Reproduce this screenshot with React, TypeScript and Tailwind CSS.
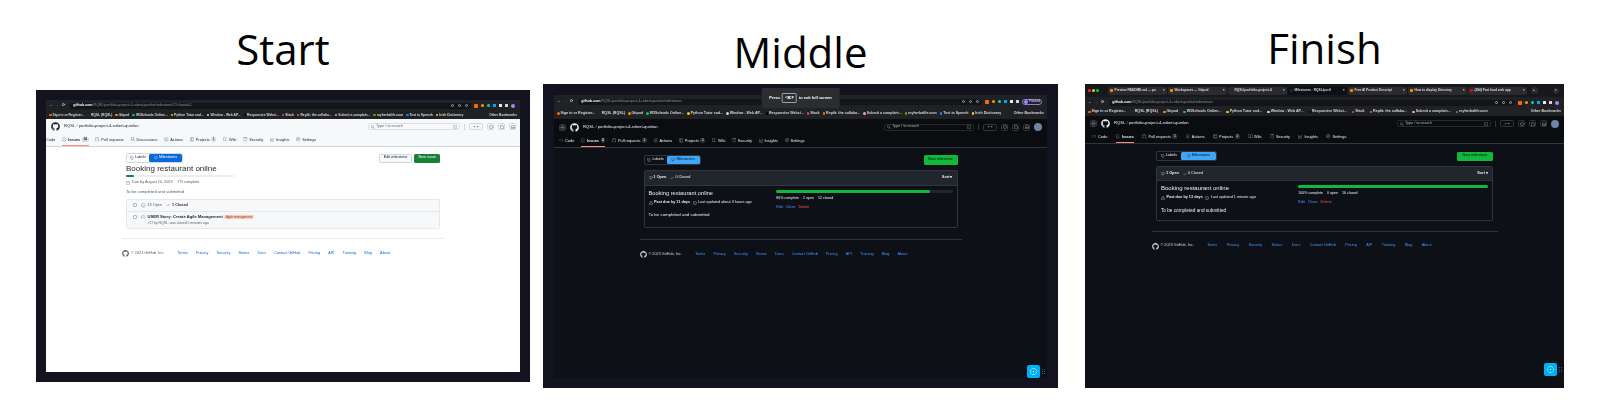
import { ReactNode } from "react";
import { FaGithub } from "react-icons/fa";
import { Menu } from "lucide-react";
import {
  GoAlert,
  GoBook,
  GoCalendar,
  GoCheck,
  GoClock,
  GoCode,
  GoCommentDiscussion,
  GoGear,
  GoGitPullRequest,
  GoGraph,
  GoInbox,
  GoIssueClosed,
  GoIssueOpened,
  GoMilestone,
  GoPlay,
  GoPlus,
  GoSearch,
  GoShield,
  GoTable,
  GoTag,
  GoTerminal,
  GoTriangleDown,
} from "react-icons/go";

const footerLinks = ["Terms", "Privacy", "Security", "Status", "Docs", "Contact GitHub", "Pricing", "API", "Training", "Blog", "About"];

const bookmarks = [
  { label: "Sign in or Register...", dot: "bg-orange-500" },
  { label: "RQSL (RQSL)", dot: "bg-gray-800" },
  { label: "Gitpod", dot: "bg-orange-400" },
  { label: "W3Schools Online...", dot: "bg-green-500" },
  { label: "Python Tutor cod...", dot: "bg-yellow-400" },
  { label: "Window - Web AP...", dot: "bg-gray-300" },
  { label: "Responsive Websi...", dot: "bg-black" },
  { label: "Slack", dot: "bg-pink-500" },
  { label: "Replit: the collabo...", dot: "bg-orange-500" },
  { label: "Submit a complain...", dot: "bg-rose-300" },
  { label: "myherbalife.com", dot: "bg-lime-600" },
];

const extraBookmarks = [
  { label: "Text to Speech", dot: "bg-blue-500" },
  { label: "Irish Dictionary", dot: "bg-amber-300" },
];

const browserTabs = ["Preview README.md — po", "Workspaces — Gitpod", "RQSL/portfolio-project-4", "Milestones · RQSL/portf", "Free AI Product Descript", "How to display Directory", "(284) Fast food web app"];

type TabDef = { label: string; icon: ReactNode; count?: string; active?: boolean };

function makeTabs(issues: string, pulls: string, discussions: boolean): TabDef[] {
  const tabs: TabDef[] = [
    { label: "Code", icon: <GoCode /> },
    { label: "Issues", icon: <GoIssueOpened />, count: issues, active: true },
    { label: "Pull requests", icon: <GoGitPullRequest />, count: pulls },
  ];
  if (discussions) tabs.push({ label: "Discussions", icon: <GoCommentDiscussion /> });
  return tabs.concat([
    { label: "Actions", icon: <GoPlay /> },
    { label: "Projects", icon: <GoTable />, count: "1" },
    { label: "Wiki", icon: <GoBook /> },
    { label: "Security", icon: <GoShield /> },
    { label: "Insights", icon: <GoGraph /> },
    { label: "Settings", icon: <GoGear /> },
  ]);
}

type BrowserProps = {
  url: string;
  addressRow: string;
  bookmarkRow: string;
  extras?: boolean;
  showNotice?: boolean;
  tabs?: boolean;
  paused?: boolean;
};

function Browser({ url, addressRow, bookmarkRow, extras, showNotice, tabs, paused }: BrowserProps) {
  const marks = extras ? bookmarks.concat(extraBookmarks) : bookmarks;
  return (
    <div className="relative bg-[#202124] text-[3.6px] font-bold text-[#d5d7da]">
      {tabs && (
        <div className="flex h-[13px] items-center bg-[#17181b] px-[3px] text-[3.2px]">
          <div className="mr-[9px] flex gap-[1.5px]">
            <span className="size-[2.5px] rounded-full bg-red-500" />
            <span className="size-[2.5px] rounded-full bg-yellow-400" />
            <span className="size-[2.5px] rounded-full bg-green-500" />
          </div>
          {browserTabs.map((t, i) => (
            <div key={t} className={`mr-[1px] flex h-[8px] w-[59px] items-center gap-[2px] rounded-[2px] px-[2px] whitespace-nowrap ${i === 3 ? "bg-[#0d1117]" : "bg-[#2a2b2f]"}`}>
              <span className={`size-[3px] shrink-0 rounded-[1px] ${i === 6 ? "bg-red-600" : i === 2 || i === 3 ? "bg-gray-800" : "bg-orange-400"}`} />
              <span className="flex-1">{t}</span>
              <span>×</span>
            </div>
          ))}
          <span className="ml-[3px] flex size-[7px] items-center justify-center rounded-full bg-[#2a2b2f]">+</span>
          <span className="mr-[2px] ml-auto flex size-[6px] items-center justify-center rounded-full bg-[#2a2b2f] text-[3px]">▾</span>
        </div>
      )}
      <div className={`flex items-center gap-[3px] px-[3px] ${addressRow}`}>
        <span>←</span>
        <span className="text-gray-500">→</span>
        <span>⟳</span>
        <div className="ml-[2px] flex h-[6px] flex-1 items-center rounded-full bg-[#131417] px-[3px] font-normal">
          <span className="font-bold text-white">github.com</span>
          <span className="text-[#8d9096]">{url}</span>
          <span className="ml-auto flex gap-[4px]">
            <span className="size-[3px] rounded-full border-[0.5px] border-gray-400" />
            <span className="size-[3px] rounded-full border-[0.5px] border-gray-400" />
            <span className="size-[3px] rounded-full border-[0.5px] border-gray-400" />
          </span>
        </div>
        <div className="flex items-center gap-[3px] pr-[2px]">
          <span className="size-[4px] rounded-[1px] bg-orange-500" />
          <span className="size-[3px] rounded-full bg-amber-500" />
          <span className="size-[3px] rounded-full bg-teal-400" />
          <span className="size-[3px] bg-sky-500" />
          <span className="size-[3px] bg-gray-200" />
          <span className="size-[3px] bg-gray-300" />
          {paused ? (
            <span className="flex h-[6px] items-center gap-[1px] rounded-full border-[0.5px] border-[#8f7bd8] px-[1px] text-[3px] text-[#c9c2ee]">
              <span className="size-[4px] rounded-full bg-violet-400" />
              Paused
            </span>
          ) : (
            <span className="size-[4px] rounded-full bg-violet-400" />
          )}
        </div>
      </div>
      <div className={`flex items-center overflow-hidden px-[3px] whitespace-nowrap ${bookmarkRow}`}>
        {marks.map((b) => (
          <span key={b.label} className="flex items-center gap-[1px]">
            <span className={`size-[2.5px] rounded-full ${b.dot}`} />
            {b.label}
          </span>
        ))}
        <span className="ml-auto pl-[4px]">Other Bookmarks</span>
      </div>
      {showNotice && (
        <div className="absolute top-[-7px] left-1/2 flex h-[20px] -translate-x-1/2 items-center gap-[2px] rounded-b-[3px] bg-[#2c2d31] px-[8px] text-[4px] text-white">
          Press <span className="rounded-[1px] border border-gray-400 px-[2px] py-[1px]">^⌘F</span> to exit full screen
        </div>
      )}
    </div>
  );
}

type HeaderProps = {
  dark: boolean;
  tabs: TabDef[];
  tabRow: string;
  hamburger: boolean;
  repoRow: string;
  searchWidth: string;
};

function RepoHeader({ dark, tabs, tabRow, hamburger, repoRow, searchWidth }: HeaderProps) {
  const border = dark ? "border-[#30363d]" : "border-[#d0d7de]";
  const text = dark ? "text-[#e6edf3]" : "text-[#1f2328]";
  return (
    <div className={`border-b ${border} ${text} ${dark ? "bg-[#0a0c10]" : "bg-[#f6f8fa]"}`}>
      <div className={`flex items-center gap-[4px] text-[4.2px] ${repoRow}`}>
        {hamburger && (
          <span className={`flex size-[7px] items-center justify-center rounded-[1.5px] border ${border}`}>
            <Menu size={5} />
          </span>
        )}
        <FaGithub className="text-[9px]" />
        <span className="font-medium">
          RQSL <span className="opacity-60">/</span> portfolio-project-4-robert-quinlan
        </span>
        <div className={`ml-auto flex h-[7px] items-center gap-[1px] rounded-[1.5px] border px-[2px] text-[3.8px] opacity-70 ${border} ${searchWidth}`}>
          <GoSearch className="text-[4px]" />
          Type / to search
          <GoTerminal className="ml-auto text-[4px]" />
        </div>
        <span className={`h-[6px] w-px ${dark ? "bg-[#30363d]" : "bg-[#d0d7de]"}`} />
        <span className={`flex h-[7px] w-[14px] shrink-0 items-center justify-center rounded-[1.5px] border text-[3.5px] ${border}`}>
          <GoPlus />
          <GoTriangleDown />
        </span>
        {[<GoIssueOpened key="a" />, <GoGitPullRequest key="b" />, <GoInbox key="c" />].map((icon, i) => (
          <span key={i} className={`flex size-[7px] shrink-0 items-center justify-center rounded-[1.5px] border text-[4px] ${border}`}>
            {icon}
          </span>
        ))}
        <span className="size-[8px] shrink-0 rounded-full bg-[#6d84a5]" />
      </div>
      <div className={`flex h-[12px] items-stretch text-[3.9px] ${tabRow}`}>
        {tabs.map((t) => (
          <span key={t.label} className={`flex items-center gap-[1.5px] border-b whitespace-nowrap ${t.active ? "border-[#fd8c73] font-semibold" : "border-transparent"}`}>
            <span className="text-[4.5px] opacity-70">{t.icon}</span>
            {t.label}
            {t.count && <span className="rounded-full bg-[#8b949e]/30 px-[1.5px] text-[3.4px]">{t.count}</span>}
          </span>
        ))}
      </div>
    </div>
  );
}

function Toggle({ dark, width }: { dark: boolean; width: string }) {
  return (
    <div className={`flex h-[10px] rounded-[1.5px] border text-[3.8px] font-medium ${width} ${dark ? "border-[#30363d] text-[#e6edf3]" : "border-[#d0d7de] text-[#1f2328]"}`}>
      <span className="flex flex-1 items-center justify-center gap-[1px]">
        <GoTag className="text-[4px]" /> Labels
      </span>
      <span className={`flex flex-[1.5] items-center justify-center gap-[1px] rounded-[1.5px] ${dark ? "bg-[#3fa6f8] text-[#0d1117]" : "bg-[#0969da] text-white"}`}>
        <GoMilestone className="text-[4px]" /> Milestones
      </span>
    </div>
  );
}

function Footer({ dark, width, mt, links }: { dark: boolean; width: string; mt: string; links: string }) {
  return (
    <div className={`mx-auto ${width} ${mt} border-t pt-[11px] ${dark ? "border-[#30363d]" : "border-[#e8eaed]"}`}>
      <div className={`flex items-center text-[3.8px] ${dark ? "text-[#c9d1d9]" : "text-[#57606a]"}`}>
        <FaGithub className="mr-[2px] text-[7px]" />
        <span>© 2023 GitHub, Inc.</span>
        <div className={`ml-[13px] flex ${links} ${dark ? "text-[#4493f8]" : "text-[#0969da]"}`}>
          {footerLinks.map((l) => (
            <span key={l} className="whitespace-nowrap">{l}</span>
          ))}
        </div>
      </div>
    </div>
  );
}

type BoxProps = {
  title: string;
  complete: string;
  progress: string;
  meta: string;
  updated: string;
  width: string;
  titleSize: string;
  descSize: string;
  bodyPad: string;
  headerHeight: string;
};

function MilestoneBox({ title, complete, progress, meta, updated, width, titleSize, descSize, bodyPad, headerHeight }: BoxProps) {
  return (
    <div className={`mx-auto mt-[5px] ${width} rounded-[1.5px] border border-[#30363d] text-[#e6edf3]`}>
      <div className={`flex items-center gap-[4px] border-b border-[#30363d] bg-[#21262d] px-[4px] text-[3.8px] font-semibold ${headerHeight}`}>
        <span className="flex items-center gap-[1px]">
          <GoMilestone className="text-[4px]" /> 1 Open
        </span>
        <span className="flex items-center gap-[1px] font-normal">
          <GoCheck className="text-[4px]" /> 0 Closed
        </span>
        <span className="ml-auto">Sort ▾</span>
      </div>
      <div className={`flex px-[4px] pt-[3px] ${bodyPad}`}>
        <div className="w-[42%]">
          <div className={`${titleSize} leading-[9px]`}>{title}</div>
          <div className="mt-[2px] flex items-center gap-[1.5px] text-[3.8px]">
            <GoAlert className="text-[4px]" />
            <span className="font-semibold">{meta}</span>
            <GoClock className="ml-[1px] text-[4px]" />
            <span>{updated}</span>
          </div>
          <div className={`mt-[6px] ${descSize}`}>To be completed and submitted</div>
        </div>
        <div className="flex-1 pt-[1px]">
          <div className="h-[3px] rounded-full bg-[#21262d]">
            <div className={`h-full rounded-full bg-[#12b83c] ${progress}`} />
          </div>
          <div className="mt-[3px] flex gap-[4px] text-[3.6px]">
            {complete.split("|").map((c) => (
              <span key={c}>{c}</span>
            ))}
          </div>
          <div className="mt-[4px] flex gap-[3px] text-[3.8px] text-[#4493f8]">
            <span>Edit</span>
            <span>Close</span>
            <span className="text-[#f85149]">Delete</span>
          </div>
        </div>
      </div>
    </div>
  );
}

function Fab({ className }: { className: string }) {
  return (
    <div className={`absolute flex items-center gap-[2px] ${className}`}>
      <span className="flex size-[13px] items-center justify-center rounded-[2px] bg-[#00b0f4] text-[7px] text-white">
        <GoIssueOpened />
      </span>
      <span className="grid grid-cols-2 gap-[1px]">
        {[0, 1, 2, 3, 4, 5].map((i) => (
          <span key={i} className="size-[1px] bg-[#0b6d94]" />
        ))}
      </span>
    </div>
  );
}

function StartPanel() {
  return (
    <div className="flex h-[292px] flex-col bg-[#12131f] p-[10px] blur-[0.3px]">
      <Browser url="/RQSL/portfolio-project-4-robert-quinlan/milestone/1?closed=1" addressRow="h-[11px]" bookmarkRow="h-[8px] gap-[3px] text-[3.3px]" extras />
      <div className="flex-1 overflow-hidden bg-white text-[#1f2328]">
        <RepoHeader
          dark={false}
          tabs={makeTabs("14", "", true).map((t) => (t.label === "Pull requests" ? { ...t, count: undefined } : t))}
          tabRow="-ml-[6px] gap-[6.8px]"
          hamburger={false}
          repoRow="h-[15px] -mr-[8px] pl-[5px]"
          searchWidth="w-[92px]"
        />
        <div className="mx-auto mt-[6px] w-[314px]">
          <div className="flex items-center">
            <Toggle dark={false} width="w-[57px]" />
            <span className="ml-auto flex h-[9px] items-center rounded-[1.5px] border border-[#d0d7de] bg-[#f6f8fa] px-[4px] text-[3.8px] font-medium">Edit milestone</span>
            <span className="ml-[2px] flex h-[9px] items-center rounded-[1.5px] bg-[#1a7f37] px-[4px] text-[3.8px] font-medium text-white">New issue</span>
          </div>
          <div className="text-[8px] leading-[11px]">Booking restaurant online</div>
          <div className="mt-[1px] h-[2px] w-[108px] rounded-full bg-[#eaeef2]">
            <div className="h-full w-[7%] rounded-full bg-[#1a7f37]" />
          </div>
          <div className="mt-[3px] flex items-center gap-[2px] text-[3.8px] text-[#57606a]">
            <GoCalendar className="text-[4px]" /> Due by August 10, 2023
            <span className="ml-[3px]">7% complete</span>
          </div>
          <div className="mt-[3px] text-[4.2px] text-[#57606a]">To be completed and submitted</div>
          <div className="mt-[4px] rounded-[1.5px] border border-[#e4e8ec] bg-[#f6f8fa] text-[3.8px]">
            <div className="flex h-[12px] items-center gap-[2px] border-b border-[#e4e8ec] pl-[6px]">
              <span className="size-[4px] rounded-[1px] border border-[#afb8c1]" />
              <GoIssueOpened className="ml-[2px] text-[4.5px] text-[#57606a]" />
              <span className="text-[#57606a]">13 Open</span>
              <GoCheck className="ml-[2px] text-[4px]" />
              <span className="font-semibold">1 Closed</span>
            </div>
            <div className="flex gap-[2px] py-[2px] pl-[6px]">
              <span className="mt-[1px] size-[4px] rounded-[1px] border border-[#afb8c1]" />
              <GoIssueClosed className="mt-[1px] ml-[2px] text-[4.5px] text-[#8250df]" />
              <div>
                <div className="flex items-center gap-[1px]">
                  <span className="text-[4.1px] font-semibold">USER Story: Create Agile Management</span>
                  <span className="rounded-full bg-[#ffcdbd] px-[2px] text-[3.2px] text-[#8a3b1f]">Agile management</span>
                </div>
                <div className="mt-[1px] text-[3.4px] text-[#57606a]">#17 by RQSL, was closed 5 minutes ago</div>
              </div>
            </div>
          </div>
        </div>
        <Footer dark={false} width="w-[322px]" mt="mt-[9px]" links="gap-[8.2px]" />
      </div>
    </div>
  );
}

function MiddlePanel() {
  return (
    <div className="flex h-[304px] flex-col bg-[#12131f] px-[11px] pt-[11px] pb-[10px] blur-[0.3px]">
      <Browser url="/RQSL/portfolio-project-4-robert-quinlan/milestones" addressRow="h-[13px]" bookmarkRow="h-[11px] gap-[3px]" extras showNotice paused />
      <div className="relative flex-1 bg-[#0d1117]">
        <RepoHeader dark tabs={makeTabs("2", "1", false)} tabRow="px-[5px] gap-[6.6px]" hamburger repoRow="h-[16px] px-[5px]" searchWidth="w-[90px]" />
        <div className="mx-auto mt-[7px] flex w-[314px] items-center">
          <Toggle dark width="w-[57px]" />
          <span className="ml-auto flex h-[10px] w-[34px] items-center justify-center rounded-[1.5px] bg-[#12b83c] text-[3.8px] font-medium text-[#0d1117]">New milestone</span>
        </div>
        <MilestoneBox title="Booking restaurant online" complete="86% complete|2 open|12 closed" progress="w-[87%]" meta="Past due by 11 days" updated="Last updated about 3 hours ago" width="w-[314px]" titleSize="text-[5.7px]" descSize="text-[4.4px]" bodyPad="pb-[9px]" headerHeight="h-[15px]" />
        <Footer dark width="w-[322px]" mt="mt-[11px]" links="gap-[8.2px]" />
        <Fab className="right-[2px] bottom-0" />
      </div>
    </div>
  );
}

function FinishPanel() {
  return (
    <div className="flex h-[304px] flex-col bg-[#0d1117] blur-[0.3px]">
      <Browser url="/RQSL/portfolio-project-4-robert-quinlan/milestones" addressRow="h-[11px]" bookmarkRow="h-[8px] gap-[5px]" tabs />
      <div className="relative flex-1">
        <RepoHeader dark tabs={makeTabs("", "1", false)} tabRow="px-[7px] gap-[8.5px]" hamburger repoRow="h-[15px] px-[5px]" searchWidth="w-[94px]" />
        <div className="mx-auto mt-[7px] flex w-[337px] items-center">
          <Toggle dark width="w-[61px]" />
          <span className="ml-auto flex h-[9px] w-[36px] items-center justify-center rounded-[1.5px] bg-[#12b83c] text-[3.8px] font-medium text-[#0d1117]">New milestone</span>
        </div>
        <MilestoneBox title="Booking restaurant online" complete="100% complete|0 open|16 closed" progress="w-full" meta="Past due by 13 days" updated="Last updated 1 minute ago" width="w-[337px]" titleSize="text-[6px]" descSize="text-[4.7px]" bodyPad="pb-[6px]" headerHeight="h-[14px]" />
        <Footer dark width="w-[346px]" mt="mt-[10px]" links="gap-[9.4px]" />
        <Fab className="right-[2px] bottom-[12px]" />
      </div>
    </div>
  );
}

export default function App() {
  const heading = "text-center font-['Open_Sans',sans-serif] text-[42px] leading-[58px] text-black";
  return (
    <div className="flex h-[400px] w-[1600px] overflow-hidden bg-white font-['Liberation_Sans',sans-serif]">
      <section className="ml-[36px] w-[494px] pt-[20px]">
        <h2 className={heading}>Start</h2>
        <div className="mt-[12px]"><StartPanel /></div>
      </section>
      <section className="ml-[13px] w-[515px] pt-[23px]">
        <h2 className={heading}>Middle</h2>
        <div className="mt-[3px]"><MiddlePanel /></div>
      </section>
      <section className="ml-[27px] w-[479px] pt-[19px]">
        <h2 className={heading}>Finish</h2>
        <div className="mt-[7px]"><FinishPanel /></div>
      </section>
    </div>
  );
}
